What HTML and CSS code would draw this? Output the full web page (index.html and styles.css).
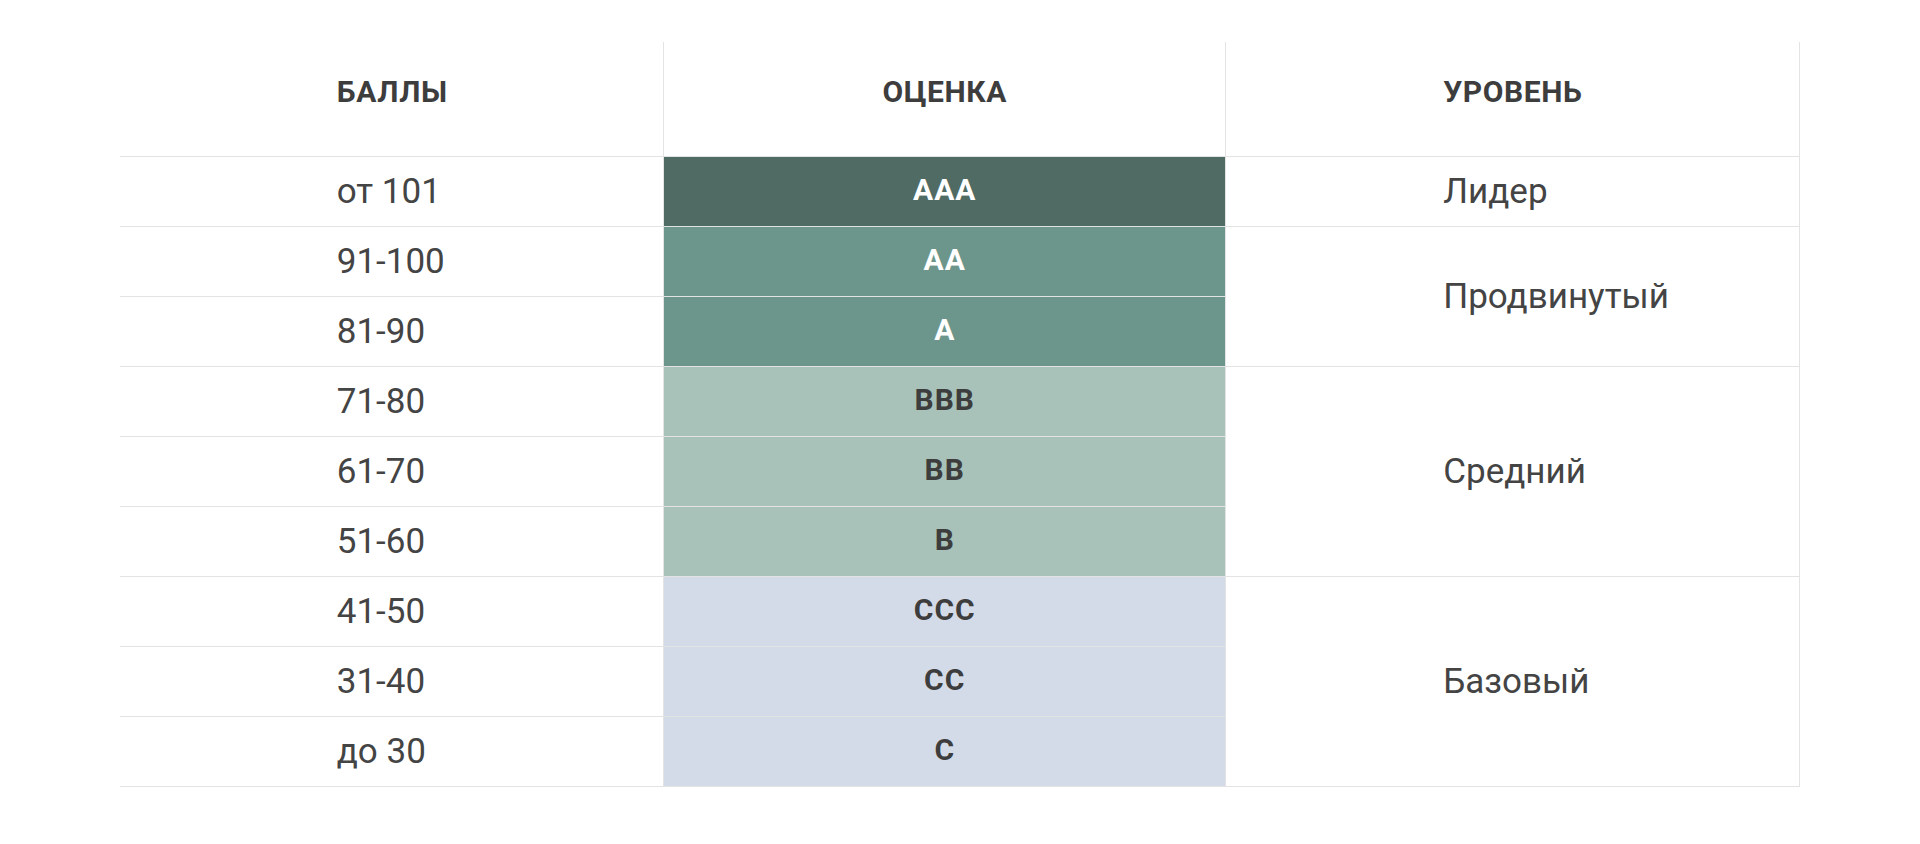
FILE: index.html
```html
<!DOCTYPE html>
<html lang="ru">
<head>
<meta charset="utf-8">
<title>Рейтинг</title>
<link rel="stylesheet" href="styles.css">
</head>
<body>
<table class="rating">
  <colgroup>
    <col class="c-score">
    <col class="c-grade">
    <col class="c-level">
  </colgroup>
  <thead>
    <tr class="head-row">
      <th class="score">БАЛЛЫ</th>
      <th class="grade">ОЦЕНКА</th>
      <th class="level">УРОВЕНЬ</th>
    </tr>
  </thead>
  <tbody>
    <tr>
      <td class="score">от 101</td>
      <td class="grade g-dark">AAA</td>
      <td class="level">Лидер</td>
    </tr>
    <tr>
      <td class="score">91-100</td>
      <td class="grade g-mid">AA</td>
      <td class="level" rowspan="2">Продвинутый</td>
    </tr>
    <tr>
      <td class="score">81-90</td>
      <td class="grade g-mid">A</td>
    </tr>
    <tr>
      <td class="score">71-80</td>
      <td class="grade g-light">BBB</td>
      <td class="level" rowspan="3">Средний</td>
    </tr>
    <tr>
      <td class="score">61-70</td>
      <td class="grade g-light">BB</td>
    </tr>
    <tr>
      <td class="score">51-60</td>
      <td class="grade g-light">B</td>
    </tr>
    <tr>
      <td class="score">41-50</td>
      <td class="grade g-blue">CCC</td>
      <td class="level" rowspan="3">Базовый</td>
    </tr>
    <tr>
      <td class="score">31-40</td>
      <td class="grade g-blue">CC</td>
    </tr>
    <tr>
      <td class="score">до 30</td>
      <td class="grade g-blue">C</td>
    </tr>
  </tbody>
</table>
</body>
</html>
```

FILE: styles.css
```css
html, body {
  margin: 0;
  padding: 0;
  background: #ffffff;
}

body {
  font-family: Roboto, "Noto Sans", "DejaVu Sans", sans-serif;
  color: #444444;
}

.rating {
  width: 1680px;
  margin: 42px auto 0;
  border-collapse: collapse;
  table-layout: fixed;
}

.c-score { width: 544px; }
.c-grade { width: 562px; }
.c-level { width: 574px; }

.rating th,
.rating td {
  padding: 0;
  border: 1px solid #e3e3e3;
  vertical-align: middle;
}

.rating tr > :first-child {
  border-left: none;
}

.rating thead th {
  border-top: none;
  height: 114px;
  padding-bottom: 14px;
  box-sizing: border-box;
  font-size: 30px;
  font-weight: 700;
  color: #3d3d3d;
  letter-spacing: 0.6px;
}

.rating tbody tr {
  height: 70px;
}

.rating tbody td {
  font-size: 35px;
  font-weight: 400;
  color: #444444;
}

.score,
.level {
  text-align: left;
  padding-left: 217px !important;
}

.grade {
  text-align: center;
}

.rating tbody td.grade {
  font-size: 30px;
  font-weight: 700;
  letter-spacing: 1px;
  padding-bottom: 4px !important;
}

.g-dark {
  background: #4f6b63;
  color: #ffffff !important;
}

.g-mid {
  background: #6c968b;
  color: #ffffff !important;
}

.g-light {
  background: #a8c2ba;
  color: #3d3d3d !important;
}

.g-blue {
  background: #d3dae8;
  color: #3d3d3d !important;
}
```
